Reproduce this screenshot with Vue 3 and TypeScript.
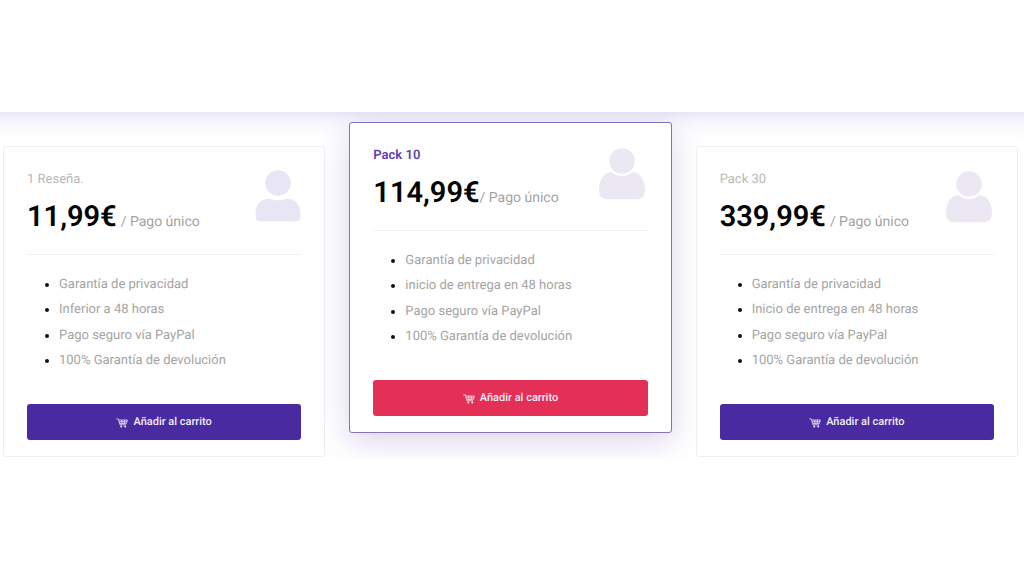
<script setup lang="ts">
interface Plan {
  id: string
  name: string
  price: string
  spaced: boolean
  featured: boolean
  icon: 'flat' | 'round'
  features: string[]
}

const plans: Plan[] = [
  {
    id: 'single',
    name: '1 Reseña.',
    price: '11,99€',
    spaced: true,
    featured: false,
    icon: 'flat',
    features: ['Garantía de privacidad', 'Inferior a 48 horas', 'Pago seguro vía PayPal', '100% Garantía de devolución'],
  },
  {
    id: 'pack-10',
    name: 'Pack 10',
    price: '114,99€',
    spaced: false,
    featured: true,
    icon: 'round',
    features: ['Garantía de privacidad', 'inicio de entrega en 48 horas', 'Pago seguro vía PayPal', '100% Garantía de devolución'],
  },
  {
    id: 'pack-30',
    name: 'Pack 30',
    price: '339,99€',
    spaced: true,
    featured: false,
    icon: 'round',
    features: ['Garantía de privacidad', 'Inicio de entrega en 48 horas', 'Pago seguro vía PayPal', '100% Garantía de devolución'],
  },
]
</script>

<template>
  <main class="page">
    <section class="pricing">
      <article v-for="plan in plans" :key="plan.id" class="card" :class="{ featured: plan.featured }">
        <header class="head">
          <div>
            <h2 class="name">{{ plan.name }}</h2>
            <p class="amount" :class="{ spaced: plan.spaced }">
              <strong class="price">{{ plan.price }}</strong>
              <span class="term">/ Pago único</span>
            </p>
          </div>
          <svg v-if="plan.icon === 'flat'" class="person flat" viewBox="0 0 46 52" aria-hidden="true">
            <circle cx="23" cy="13" r="12.8" />
            <path d="M13 29C17 28.4 17.5 30.3 23 30.3S29 28.4 33 29C40 29 45.3 35 45.3 42V47.5Q45.3 51.3 41.5 51.3H4.5Q.7 51.3 .7 47.5V42C.7 35 6 29 13 29Z" />
          </svg>
          <svg v-else class="person" viewBox="0 0 46 52" aria-hidden="true">
            <circle cx="23" cy="13" r="12.8" />
            <path d="M11.5 24.3C14 24 15.5 28 23 28S32 24 34.5 24.3C42 24.7 46 33 46 42.5Q46 51.3 37.5 51.3H8.5Q0 51.3 0 42.5C0 33 4 24.7 11.5 24.3Z" />
          </svg>
        </header>
        <ul class="features">
          <li v-for="feature in plan.features" :key="feature"><span>{{ feature }}</span></li>
        </ul>
        <button type="button" class="buy">
          <svg class="cart" viewBox="0 0 12 10" aria-hidden="true">
            <path d="M.3 .8H2.2L4 6.8H10.2M2.700 2H11.4L10.4 5.400H3.900M3.300 3.700H10.800M5.500 2L6 5.500M8.500 2L8.200 5.500" />
            <circle cx="5.2" cy="8.6" r="1" />
            <circle cx="9.2" cy="8.6" r="1" />
          </svg>
          <span>Añadir al carrito</span>
        </button>
      </article>
    </section>
  </main>
</template>

<style>
body {
  margin: 0;
  background: #fff;
}
</style>

<style scoped>
.page {
  padding-top: 112px;
  font-family: Roboto, "Liberation Sans", sans-serif;
  text-rendering: geometricPrecision;
}
.pricing {
  display: grid;
  grid-template-columns: repeat(3, 1fr);
  align-items: start;
  gap: 24px;
  padding: 34px 6px 2px 3px;
  overflow: hidden;
  background: linear-gradient(#e9e6f6, #f5f4fb 8px, #fcfcfe 18px, #fff 30px);
}
.card {
  box-sizing: border-box;
  padding: 22px 23px 16px;
  border: 1px solid #f0f0f1;
  border-radius: 3px;
  background: #fff;
}
.featured {
  margin-top: -24px;
  margin-bottom: 24px;
  border-color: #8570c4;
  box-shadow: 0 8px 32px rgba(73, 42, 160, 0.2);
}
.head {
  display: flex;
  justify-content: space-between;
  align-items: flex-start;
  height: 85px;
  border-bottom: 1px solid #f1f1f2;
}
.name {
  margin: 0;
  font-size: 13px;
  line-height: 21px;
  font-weight: 400;
  color: #b9b9b9;
}
.featured .name {
  font-weight: 600;
  color: #5f3fb2;
}
.amount {
  display: flex;
  align-items: baseline;
  margin: 9px 0 0;
  line-height: 36px;
  white-space: nowrap;
}
.spaced {
  gap: 4px;
}
.price {
  font-size: 29px;
  font-weight: 600;
  color: #050505;
}
.term {
  font-size: 14px;
  color: #a3a3a3;
}
.person {
  width: 46px;
  height: 52px;
  margin: 2px 2px 0 0;
  fill: #ebe8f4;
}
.flat {
  margin: 1px 0 0;
  fill: #e8e6f4;
}
.featured .person {
  margin: 3px 3px 0 0;
}
.features {
  display: grid;
  grid-template-rows: repeat(4, 1fr);
  align-items: center;
  height: 102px;
  margin: 17px 0 30px;
  padding-left: 32px;
  font-size: 13px;
  line-height: 20px;
  color: #111;
}
.features span {
  color: #a4a4a4;
}
.buy {
  display: flex;
  justify-content: center;
  align-items: center;
  gap: 5px;
  width: 100%;
  height: 36px;
  padding: 0;
  border: 0;
  border-radius: 3px;
  background: #492aa0;
  color: #f1edfa;
  font-family: inherit;
  text-rendering: inherit;
  font-size: 11px;
  line-height: 18px;
  font-weight: 500;
  cursor: pointer;
}
.featured .buy {
  background: #e43056;
}
.cart {
  width: 12px;
  height: 10px;
  margin-top: 1px;
  fill: currentColor;
}
.cart path {
  fill: none;
  stroke: currentColor;
  stroke-width: 0.8;
}
</style>
